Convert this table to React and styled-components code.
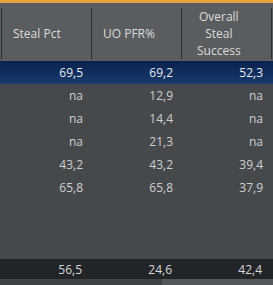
import React from 'react'
import styled, { createGlobalStyle } from 'styled-components'

const GlobalStyle = createGlobalStyle`
  html, body {
    margin: 0;
    padding: 0;
    background: #46494c;
  }
  body {
    font-family: "Open Sans", "Noto Sans", sans-serif;
    font-size: 12px;
  }
`;

const Panel = styled.div`
  width: 273px;
  height: 285px;
  display: flex;
  flex-direction: column;
  overflow: hidden;
  background: #46494c;
`;

const AccentBar = styled.div`
  height: 3px;
  background: #e9a43e;
`;

const HeaderRow = styled.div`
  height: 58px;
  display: grid;
  grid-template-columns: 90px 90px 90px 1fr;
  padding-left: 1px;
  background: #5a5d60;
`;

const HeaderCell = styled.div`
  margin: 5px 0 4px;
  border-left: 1px solid #2c2f31;
  display: flex;
  align-items: center;
  padding-left: ${(props) => props.$wrap ? '15px' : '11px'};
  color: #dcdcdc;
  line-height: 17px;
`;

const HeaderLabel = styled.span`
  display: inline-block;
  text-align: center;
`;

const Body = styled.div`
  flex: 1;
  display: flex;
  flex-direction: column;
`;

const Row = styled.div`
  height: 23px;
  display: grid;
  grid-template-columns: 90px 90px 90px;
  padding-left: 1px;
  align-items: center;
  color: ${(props) => props.$selected ? '#e6eaf0' : '#cfd0d1'};
  background: ${(props) => props.$selected
    ? 'linear-gradient(to bottom, #0a2250 0%, #12305f 60%, #1b3d6c 100%)'
    : 'transparent'};
`;

const Cell = styled.div`
  text-align: right;
  padding-right: 8px;
`;

const FooterRow = styled(Row)`
  height: 20px;
  background: #222528;
  color: #d8d9da;
`;

const FooterCell = styled(Cell)`
  padding-right: 9px;
`;

const ScrollTrack = styled.div`
  height: 6px;
  display: flex;
  background: #3f4245;
`;

const ScrollThumb = styled.div`
  margin-left: 162px;
  flex: 1;
  background: #54575a;
`;

const rows = [
  ['69,5', '69,2', '52,3'],
  ['na', '12,9', 'na'],
  ['na', '14,4', 'na'],
  ['na', '21,3', 'na'],
  ['43,2', '43,2', '39,4'],
  ['65,8', '65,8', '37,9'],
];

const totals = ['56,5', '24,6', '42,4'];

export default function App() {
  return (
    <Panel>
      <GlobalStyle />
      <AccentBar />
      <HeaderRow>
        <HeaderCell><HeaderLabel>Steal Pct</HeaderLabel></HeaderCell>
        <HeaderCell><HeaderLabel>UO PFR%</HeaderLabel></HeaderCell>
        <HeaderCell $wrap><HeaderLabel>Overall<br />Steal<br />Success</HeaderLabel></HeaderCell>
        <HeaderCell />
      </HeaderRow>
      <Body>
        {rows.map((r, i) => (
          <Row key={i} $selected={i === 0}>
            {r.map((v, j) => <Cell key={j}>{v}</Cell>)}
          </Row>
        ))}
      </Body>
      <FooterRow>
        {totals.map((v, j) => <FooterCell key={j}>{v}</FooterCell>)}
      </FooterRow>
      <ScrollTrack>
        <ScrollThumb />
      </ScrollTrack>
    </Panel>
  )
}
